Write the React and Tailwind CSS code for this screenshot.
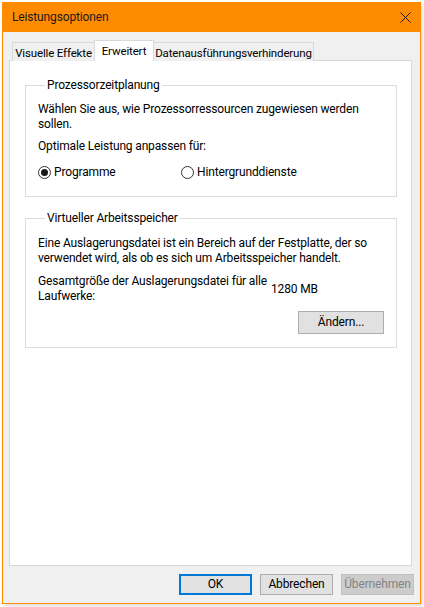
import React from "react";

const font = { fontFamily: 'Roboto, "Segoe UI", sans-serif', letterSpacing: "-0.15px" };

function Radio({ checked, label }) {
  return (
    <div className="flex items-center gap-[3px]">
      <span className="w-[13px] h-[13px] rounded-full border border-[#333333] bg-white flex items-center justify-center">
        {checked && <span className="w-[7px] h-[7px] rounded-full bg-[#1a1a1a]" />}
      </span>
      <span>{label}</span>
    </div>
  );
}

export default function App() {
  return (
    <div
      className="w-[424px] h-[607px] bg-white overflow-hidden pt-[2px] pl-[2px] text-[12px] leading-[15px] text-black"
      style={font}
    >
      <div className="w-[419px] h-[602px] border border-[#ff8c00] bg-[#f0f0f0] flex flex-col shadow-[2px_2px_4px_rgba(0,0,0,0.15)]">
        {/* Title bar */}
        <div className="h-[29px] bg-[#ff8c00] flex items-center justify-between pl-[9px] pr-[9px] shrink-0">
          <span className="text-[12px] text-[#1a1a1a]">Leistungsoptionen</span>
          <svg width="11" height="11" viewBox="0 0 11 11">
            <path d="M0.5 0.5 L10.5 10.5 M10.5 0.5 L0.5 10.5" stroke="#1a1a1a" strokeWidth="1" fill="none" />
          </svg>
        </div>

        {/* Body */}
        <div className="flex-1 flex flex-col pl-[6px] pr-[6px] pt-[8px] pb-[8px]">
          {/* Tabs */}
          <div className="flex items-end pl-[3px] h-[21px] relative z-10 -mb-[1px] mr-[2px] whitespace-nowrap text-[11.5px]">
            <div className="w-[83px] shrink-0 h-[19px] border border-b-0 border-[#d9d9d9] bg-[#f0f0f0] flex items-center justify-center pt-[2px]">
              Visuelle Effekte
            </div>
            <div className="w-[60px] shrink-0 h-[21px] border border-b-0 border-[#d9d9d9] bg-white -mx-[1px] relative flex items-start justify-center pt-[3px]">
              Erweitert
            </div>
            <div className="w-[161px] shrink-0 h-[19px] border border-b-0 border-[#d9d9d9] bg-[#f0f0f0] flex items-center justify-center pt-[2px]">
              Datenausführungsverhinderung
            </div>
          </div>

          {/* Panel */}
          <div className="flex-1 bg-white border border-[#d9d9d9] mr-[2px] pt-[17px] pl-[15px] pr-[14px]">
            <fieldset className="border border-[#dcdcdc] pl-[12px] pr-[12px] pt-[9px] pb-[16px] whitespace-nowrap">
              <legend className="ml-[7px] px-[2px]">Prozessorzeitplanung</legend>
              <p>
                Wählen Sie aus, wie Prozessorressourcen zugewiesen werden
                <br />
                sollen.
              </p>
              <p className="mt-[7px]">Optimale Leistung anpassen für:</p>
              <div className="mt-[11px] flex items-center">
                <div className="w-[143px]">
                  <Radio checked label="Programme" />
                </div>
                <Radio label="Hintergrunddienste" />
              </div>
            </fieldset>

            <fieldset className="mt-[14px] border border-[#dcdcdc] pl-[12px] pr-[12px] pt-[10px] pb-[13px] whitespace-nowrap">
              <legend className="ml-[7px] px-[2px]">Virtueller Arbeitsspeicher</legend>
              <p>
                Eine Auslagerungsdatei ist ein Bereich auf der Festplatte, der so
                <br />
                verwendet wird, als ob es sich um Arbeitsspeicher handelt.
              </p>
              <div className="mt-[8px] flex items-center">
                <p className="w-[233px]">
                  Gesamtgröße der Auslagerungsdatei für alle
                  <br />
                  Laufwerke:
                </p>
                <span>1280 MB</span>
              </div>
              <div className="mt-[7px] flex justify-end">
                <button className="w-[86px] h-[23px] bg-[#e1e1e1] border border-[#adadad] flex items-center justify-center">
                  Ändern...
                </button>
              </div>
            </fieldset>
          </div>

          {/* Buttons */}
          <div className="mt-[8px] flex justify-end gap-[8px] whitespace-nowrap">
            <button className="w-[73px] h-[21px] bg-[#e1e1e1] border-2 border-[#0078d7] flex items-center justify-center">
              OK
            </button>
            <button className="w-[73px] h-[21px] bg-[#e1e1e1] border border-[#adadad] flex items-center justify-center">
              Abbrechen
            </button>
            <button className="w-[73px] h-[21px] bg-[#cccccc] border border-[#bfbfbf] text-[#838383] flex items-center justify-center">
              Übernehmen
            </button>
          </div>
        </div>
      </div>
    </div>
  );
}
